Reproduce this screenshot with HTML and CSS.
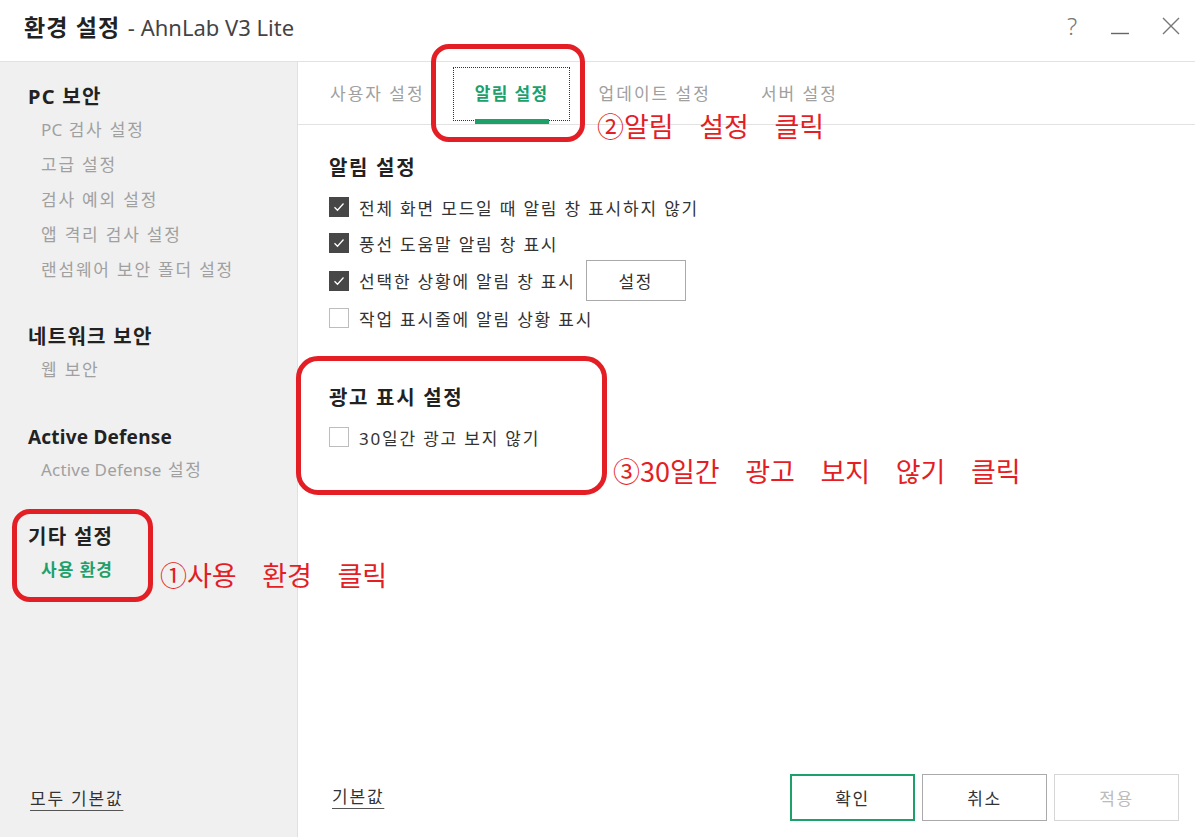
FILE: index.html
```html
<!DOCTYPE html>
<html lang="ko">
<head>
<meta charset="utf-8">
<title>환경 설정 - AhnLab V3 Lite</title>
<link rel="stylesheet" href="styles.css">
</head>
<body>
<div class="window">
  <header class="titlebar">
    <div class="title"><b>환경 설정</b> <span class="sub">- AhnLab V3 Lite</span></div>
    <div class="controls">
      <span class="ctl help">?</span>
      <span class="ctl min"><svg width="20" height="20" viewBox="0 0 20 20"><line x1="1" y1="17.5" x2="19" y2="17.5" stroke="#666" stroke-width="1.4"/></svg></span>
      <span class="ctl close"><svg width="20" height="20" viewBox="0 0 20 20"><path d="M2 2 L18 18 M18 2 L2 18" stroke="#777" stroke-width="1.4" fill="none"/></svg></span>
    </div>
  </header>
  <div class="body">
    <aside class="sidebar">
      <nav class="nav">
        <div class="group">
          <div class="nav-head">PC 보안</div>
          <div class="nav-item"><span class="lat">PC</span> 검사 설정</div>
          <div class="nav-item">고급 설정</div>
          <div class="nav-item">검사 예외 설정</div>
          <div class="nav-item">앱 격리 검사 설정</div>
          <div class="nav-item">랜섬웨어 보안 폴더 설정</div>
        </div>
        <div class="group">
          <div class="nav-head">네트워크 보안</div>
          <div class="nav-item">웹 보안</div>
        </div>
        <div class="group">
          <div class="nav-head latin">Active Defense</div>
          <div class="nav-item"><span class="lat">Active Defense</span> 설정</div>
        </div>
        <div class="group">
          <div class="nav-head">기타 설정</div>
          <div class="nav-item active">사용 환경</div>
        </div>
      </nav>
      <div class="side-foot"><a class="link">모두 기본값</a></div>
    </aside>
    <main class="main">
      <div class="tabs">
        <div class="tab">사용자 설정</div>
        <div class="tab active">알림 설정</div>
        <div class="tab">업데이트 설정</div>
        <div class="tab">서버 설정</div>
      </div>
      <div class="content">
        <section class="section">
          <h2 class="sec-title">알림 설정</h2>
          <div class="row"><span class="cb checked"><svg width="12" height="10" viewBox="0 0 12 10"><path d="M1.5 5.2 L4.5 8.2 L10.5 1.5" stroke="#fff" stroke-width="1.3" fill="none"/></svg></span><span class="label">전체 화면 모드일 때 알림 창 표시하지 않기</span></div>
          <div class="row"><span class="cb checked"><svg width="12" height="10" viewBox="0 0 12 10"><path d="M1.5 5.2 L4.5 8.2 L10.5 1.5" stroke="#fff" stroke-width="1.3" fill="none"/></svg></span><span class="label">풍선 도움말 알림 창 표시</span></div>
          <div class="row"><span class="cb checked"><svg width="12" height="10" viewBox="0 0 12 10"><path d="M1.5 5.2 L4.5 8.2 L10.5 1.5" stroke="#fff" stroke-width="1.3" fill="none"/></svg></span><span class="label">선택한 상황에 알림 창 표시</span><button class="btn set">설정</button></div>
          <div class="row"><span class="cb"></span><span class="label">작업 표시줄에 알림 상황 표시</span></div>
        </section>
        <section class="section ad">
          <h2 class="sec-title">광고 표시 설정</h2>
          <div class="row"><span class="cb"></span><span class="label">30일간 광고 보지 않기</span></div>
        </section>
      </div>
      <footer class="footer">
        <a class="link">기본값</a>
        <div class="buttons">
          <button class="btn primary">확인</button>
          <button class="btn">취소</button>
          <button class="btn disabled">적용</button>
        </div>
      </footer>
    </main>
  </div>

  <div class="mark mark1"></div>
  <div class="mark mark2"></div>
  <div class="mark mark3"></div>
  <div class="note note1">①사용 환경 클릭</div>
  <div class="note note2">②알림 설정 클릭</div>
  <div class="note note3">③30일간 광고 보지 않기 클릭</div>
</div>
</body>
</html>
```
FILE: styles.css
```css
* { box-sizing: border-box; }
html, body { margin: 0; padding: 0; background: #fff; }
body {
  font-family: "Noto Sans", "Noto Sans CJK KR", sans-serif;
  color: #333;
}
.window {
  position: relative;
  width: 1195px;
  height: 837px;
  display: flex;
  flex-direction: column;
  overflow: hidden;
}
.titlebar {
  height: 62px;
  flex: none;
  display: flex;
  align-items: center;
  justify-content: space-between;
  border-bottom: 1px solid #e2e2e2;
  padding: 0 14px 10px 24px;
}
.title { font-size: 22px; color: #222; white-space: nowrap; }
.title b { font-family: "Noto Sans CJK KR", sans-serif; font-weight: 700; font-size: 23px; letter-spacing: 1px; }
.title .sub { color: #444; font-weight: 400; font-size: 22px; margin-left: 2px; }
.controls { display: flex; align-items: center; }
.ctl { display: flex; align-items: center; justify-content: center; width: 20px; height: 24px; color: #777; }
.help { font-size: 24px; font-weight: 300; font-family: "Noto Sans", sans-serif; margin-right: 28px; }
.min { margin-right: 31px; }

.body { flex: 1; display: flex; min-height: 0; }
.sidebar {
  width: 298px;
  flex: none;
  background: #f0f0f0;
  border-right: 1px solid #e0e0e0;
  display: flex;
  flex-direction: column;
  justify-content: space-between;
  padding: 20px 0 22px 28px;
}
.nav { display: flex; flex-direction: column; gap: 35px; }
.nav-head { font-size: 20px; font-weight: 700; color: #222; line-height: 30px; letter-spacing: 1.3px; }
.nav-head.latin { font-size: 19px; letter-spacing: 0.2px; }
.nav-item { font-size: 17px; color: #a0a0a0; line-height: 35px; padding-left: 13px; letter-spacing: 1.8px; }
.nav-item .lat { letter-spacing: 0.2px; }
.nav-item.active { color: #1ea06a; font-weight: 700; letter-spacing: 1px; }
.side-foot { padding-left: 2px; }
.link {
  font-size: 17px;
  letter-spacing: 1.8px;
  color: #333;
  text-decoration: underline;
  text-underline-offset: 5px;
  text-decoration-color: #555;
  line-height: 32px;
}

.main { flex: 1; display: flex; flex-direction: column; min-width: 0; }
.tabs {
  height: 63px;
  flex: none;
  display: flex;
  align-items: stretch;
  gap: 50px;
  padding-left: 32px;
  border-bottom: 1px solid #e2e2e2;
}
.tab {
  font-size: 17px;
  letter-spacing: 2px;
  color: #a0a0a0;
  display: flex;
  align-items: center;
  padding-bottom: 2px;
  position: relative;
}
.tab.active { color: #1ea06a; font-weight: 700; letter-spacing: 1.4px; }
.tab.active::before {
  content: "";
  position: absolute;
  left: -22px; right: -21px; top: 5px; bottom: 3px;
  border: 1px dotted #333;
}
.tab.active::after {
  content: "";
  position: absolute;
  left: 0; right: 0; bottom: 0;
  height: 5px;
  background: #1ea06a;
}

.content { flex: 1; padding: 28px 0 0 31px; display: flex; flex-direction: column; gap: 47px; }
.sec-title { margin: 0 0 6px; font-size: 20px; letter-spacing: 1.7px; font-weight: 700; color: #222; line-height: 30px; }
.row { display: flex; align-items: center; min-height: 36px; }
.cb {
  width: 20px; height: 20px;
  border: 1px solid #bdbdbd;
  background: #fff;
  display: flex; align-items: center; justify-content: center;
  margin-right: 10px;
  flex: none;
}
.cb.checked { background: #474747; border-color: #474747; }
.label { font-size: 17px; letter-spacing: 1.8px; color: #333; }
.btn {
  font-family: "Noto Sans", "Noto Sans CJK KR", sans-serif;
  font-size: 17px;
  letter-spacing: 1.5px;
  color: #333;
  background: #fff;
  border: 1px solid #aaa;
  width: 125px;
  height: 47px;
  padding: 0;
}
.btn.set { width: 100px; height: 41px; margin: -1px 0 -1px 10px; }
.footer {
  height: 86px;
  flex: none;
  display: flex;
  align-items: center;
  justify-content: space-between;
  padding: 6px 16px 0 34px;
}
.buttons { display: flex; gap: 7px; }
.btn.primary { border: 2px solid #1ea06a; }
.btn.disabled { color: #bbb; border-color: #d6d6d6; }

.mark {
  position: absolute;
  border: 5px solid #e31e25;
  border-radius: 18px;
}
.mark1 { left: 12px; top: 509px; width: 141px; height: 93px; }
.mark2 { left: 431px; top: 44px; width: 154px; height: 98px; }
.mark3 { left: 296px; top: 356px; width: 311px; height: 139px; border-radius: 22px; }
.note {
  position: absolute;
  font-family: "Noto Sans CJK KR", sans-serif;
  font-size: 27px;
  line-height: 30px;
  color: #e31e25;
  word-spacing: 18px;
  white-space: nowrap;
}
.note1 { left: 160px; top: 560px; }
.note2 { left: 597px; top: 111px; }
.note3 { left: 613px; top: 456px; }
```
